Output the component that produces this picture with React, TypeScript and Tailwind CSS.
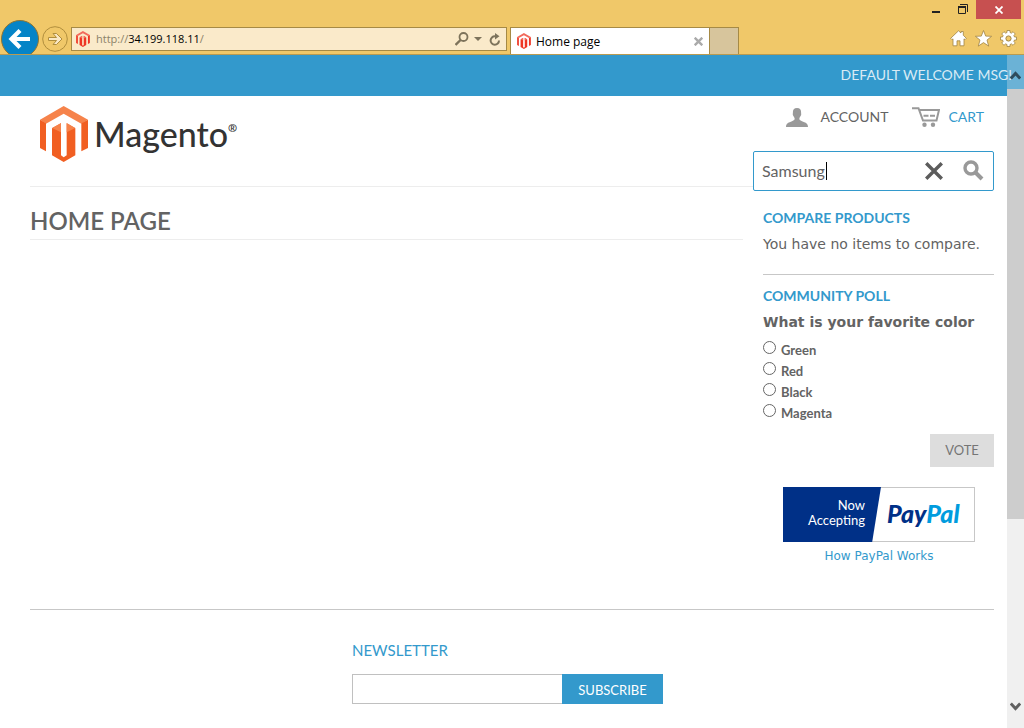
import { useState } from "react";

const raleway = "font-['Lato','Liberation_Sans',sans-serif]";
const verdana = "font-['DejaVu_Sans',sans-serif]";
const segoe = "font-['Open_Sans','Noto_Sans',sans-serif]";

function MagentoMark({ className, favicon = false }: { className: string; favicon?: boolean }) {
  const light = favicon ? "#f26a5c" : "#f6834b";
  const dark = favicon ? "#ee3524" : "#f15f22";
  return (
    <svg className={className} viewBox="60 30 144 168" aria-hidden="true">
      <path fill={light} d="M131 30 60 71l18 12 53-30 53 30 20-12z" />
      <path fill={dark} d="M60 71v85l18 10V82zM204 71v85l-20 10V82zM96 97v81l35 20 35-20V97l-26-15v96l-9 6-8-6V82z" />
      <path fill={light} d="m96 96 27-15v28zM166 96l-26-15v28z" />
    </svg>
  );
}

function BrowserChrome() {
  return (
    <header className={`relative flex h-[55px] border-b border-[#b99b51] bg-[#f0c869] text-[12px] text-black ${segoe}`}>
      <div className="flex min-w-0 flex-1 items-end">
        <button type="button" aria-label="Back" className="h-[34px] w-[40px] shrink-0 overflow-hidden">
          <svg className="h-[40px] w-[40px]" viewBox="0 0 40 40">
            <circle cx="20" cy="19" r="18.5" fill="#0584c7" stroke="#8b7434" />
            <path d="M30 19H12M20 10.500 11.500 19l8.500 8.500" fill="none" stroke="#fff" strokeWidth="4.200" />
          </svg>
        </button>
        <button type="button" aria-label="Forward" className="mb-[2px] ml-[2px] shrink-0">
          <svg className="size-[26px]" viewBox="0 0 26 26" fill="none">
            <circle cx="13" cy="13" r="12.300" stroke="#b08e3d" />
            <path d="M6.500 11.500h8l-3.500-4h3.500l5.500 5.500-5.500 5.500H11l3.500-4h-8z" fill="#fae8c4" stroke="#b08e3d" />
          </svg>
        </button>
        <div className="mb-[3px] ml-[3px] flex h-[24px] min-w-0 flex-1 items-center border border-[#a68a45] bg-[#faeaca] pr-[5px] pl-[4px]">
          <MagentoMark favicon className="mr-[6px] h-[16px] w-[14px] shrink-0" />
          <div className="flex-1 truncate pt-[1px] text-[11px] text-[#8b8269]">
            http://<span className="text-black">34.199.118.11</span>/
          </div>
          <button type="button" aria-label="Search">
            <svg className="h-[14px] w-[14px]" viewBox="0 0 14 14" fill="none" stroke="#7d735b">
              <circle cx="8.500" cy="5" r="4" strokeWidth="1.800" />
              <path d="m5.500 8-5 5" strokeWidth="2.400" />
            </svg>
          </button>
          <button type="button" aria-label="Show address history" className="mx-[5px]">
            <svg className="h-[4px] w-[8px]" viewBox="0 0 8 4"><path d="M0 0h8L4 4z" fill="#7d735b" /></svg>
          </button>
          <button type="button" aria-label="Refresh" className="ml-[2px]">
            <svg className="h-[13px] w-[12px]" viewBox="0 0 12 13" fill="none" stroke="#7d735b">
              <path d="M10 7.500A4.200 4.200 0 1 1 6 3.300h2" strokeWidth="2" />
              <path d="M6 0v6.500l4.500-3.200z" fill="#7d735b" stroke="none" />
            </svg>
          </button>
        </div>
      </div>
      <div className="flex w-[517px] shrink-0 items-end">
        <div className="ml-[3px] flex h-[27px] w-[200px] items-center border border-b-0 border-[#a68a45] bg-white px-[6px]">
          <MagentoMark favicon className="mr-[5px] h-[16px] w-[14px]" />
          <span className="flex-1 pt-[2px]">Home page</span>
          <button type="button" aria-label="Close tab">
            <svg className="size-[9px]" viewBox="0 0 9 9" stroke="#aaa" strokeWidth="2.400"><path d="m.7.700 7.600 7.600M8.300.700.700 8.300" /></svg>
          </button>
        </div>
        <button type="button" aria-label="New tab" className="h-[27px] w-[29px] border border-b-0 border-l-0 border-[#a68a45] bg-[#d7c59c]" />
        <div className="ml-auto flex h-full flex-col items-end justify-between">
          <div className="mr-[3px] flex">
            <button type="button" aria-label="Minimize" className="w-[26px] pb-[1px]">
              <svg className="mx-auto h-[18px] w-[8px]" viewBox="0 0 8 18"><path d="M0 11h8v2H0z" fill="#222" /></svg>
            </button>
            <button type="button" aria-label="Restore" className="w-[27px]">
              <svg className="mx-auto h-[19px] w-[10px]" viewBox="0 0 10 19" fill="none" stroke="#222">
                <path d="M2 4.500h7.500V12" /><path d="M.5 7h7v6.500h-7z" /><path d="M0 7h8" strokeWidth="2" />
              </svg>
            </button>
            <button type="button" aria-label="Close" className="h-[19px] w-[45px] bg-[#c75050]">
              <svg className="mx-auto size-[8px]" viewBox="0 0 8 8" stroke="#fff" strokeWidth="1.800"><path d="m.5.500 7 7M7.500.500l-7 7" /></svg>
            </button>
          </div>
          <div className="mr-[7px] mb-[7px] flex gap-[8px]">
            <button type="button" aria-label="Home">
              <svg className="size-[17px]" viewBox="0 0 17 17"><path d="M8.500.800 11 3V1.500h2.300v3.800l3 3-1.300 1.400-1-.9v7h-4v-5H7v5H3v-7l-1 .9L.700 8.300z" fill="#fff" stroke="#a08445" strokeWidth=".8" /></svg>
            </button>
            <button type="button" aria-label="Favorites">
              <svg className="size-[17px]" viewBox="0 0 17 17"><path d="m8.500.500 2.200 5.600 5.900.2-4.600 3.800 1.700 6-5.200-3.500-5.200 3.500 1.700-6L.400 6.300l5.900-.2z" fill="#fff" stroke="#a08445" strokeWidth=".8" /></svg>
            </button>
            <button type="button" aria-label="Tools">
              <svg className="size-[17px]" viewBox="0 0 17 17">
                <path d="M7 .5h3v2l1.500.6L13 1.700 15.300 4 13.900 5.500l.6 1.500h2v3h-2l-.6 1.500 1.400 1.500-2.300 2.300-1.500-1.400-1.500.6v2H7v-2l-1.500-.6L4 15.300 1.700 13l1.400-1.500L2.500 10h-2V7h2l.6-1.500L1.700 4 4 1.700l1.500 1.400L7 2.500z" fill="#fff" stroke="#a08445" strokeWidth=".8" />
                <circle cx="8.500" cy="8.500" r="2.600" fill="#f0c869" stroke="#a08445" />
              </svg>
            </button>
          </div>
        </div>
      </div>
    </header>
  );
}

function SearchBox() {
  const [query, setQuery] = useState("Samsung");
  return (
    <form className="flex h-[40px] items-center rounded-[2px] border border-[#3399cc] bg-white pr-[9px] pl-[8px]">
      <input
        aria-label="Search entire store"
        value={query}
        onChange={(e) => setQuery(e.target.value)}
        className={`field-sizing-content max-w-[150px] bg-transparent text-[16px] leading-[20px] text-[#636363] caret-transparent outline-none ${raleway}`}
      />
      <span className="ml-px h-[18px] w-px bg-black" />
      <button type="button" aria-label="Clear" onClick={() => setQuery("")} className="ml-auto">
        <svg className="size-[18px]" viewBox="0 0 18 18" stroke="#5c5c5c" strokeWidth="3.400"><path d="m1.200 1.200 15.600 15.600M16.800 1.200 1.200 16.800" /></svg>
      </button>
      <button type="submit" aria-label="Search" className="ml-[20px] pb-[2px]">
        <svg className="size-[21px]" viewBox="0 0 21 21" fill="none" stroke="#999">
          <circle cx="8" cy="8" r="6" strokeWidth="3.400" />
          <path d="m12.500 12.500 6.500 6.500" strokeWidth="4" />
        </svg>
      </button>
    </form>
  );
}

function Sidebar() {
  return (
    <aside className="text-[#636363]">
      <nav className={`flex h-[55px] items-start justify-end gap-[24px] pt-[11px] pr-[10px] text-[14px] leading-[20px] ${raleway}`}>
        <a href="#account" className="flex items-center gap-[12px]">
          <svg className="h-[19px] w-[22px]" viewBox="0 0 22 19" fill="#999">
            <path d="M11 0c3 0 4.300 2 4.100 4.500-.1 1.200.4 1.100 0 2.400-.6 1.800-1.400 2-1.700 3.400-.3 1.700.6 2.100 2.600 2.900 3.200 1.200 6 2 6 5.800H0c0-3.800 2.800-4.600 6-5.800 2-.8 2.900-1.200 2.600-2.900-.3-1.400-1.100-1.600-1.700-3.400-.4-1.300.1-1.200 0-2.400C6.700 2 8 0 11 0z" />
          </svg>
          ACCOUNT
        </a>
        <a href="#cart" className="flex items-center gap-[8px] text-[#3399cc]">
          <svg className="h-[20px] w-[28px]" viewBox="0 0 28 20" fill="none" stroke="#999" strokeWidth="2">
            <path d="M0 1.200h6.500L11 13.500h13.500L27 3H7.500" />
            <path d="M11.500 8.800h5M18 8.800h5" />
            <circle cx="12.500" cy="17.700" r="2.200" fill="#999" stroke="none" />
            <circle cx="21" cy="17.700" r="2.200" fill="#999" stroke="none" />
          </svg>
          CART
        </a>
      </nav>
      <SearchBox />
      <section className="ml-[10px] pt-[17px] pb-[20px]">
        <h2 className={`text-[14px] leading-[20px] font-bold text-[#3399cc] ${raleway}`}>COMPARE PRODUCTS</h2>
        <p className={`mt-[6px] text-[14px] leading-[20px] whitespace-nowrap ${verdana}`}>You have no items to compare.</p>
      </section>
      <form className="ml-[10px] border-t border-[#c7c7c7] pt-[11px]">
        <h2 className={`text-[14px] leading-[20px] font-bold text-[#3399cc] ${raleway}`}>COMMUNITY POLL</h2>
        <fieldset className="pt-[6px]">
          <legend className={`float-left mb-[8px] w-full text-[14px] leading-[20px] font-bold whitespace-nowrap ${verdana}`}>What is your favorite color</legend>
          {["Green", "Red", "Black", "Magenta"].map((color) => (
            <label key={color} className={`clear-both flex h-[21px] items-start gap-[5px] text-[13px] leading-[20px] font-bold ${raleway}`}>
              <input type="radio" name="color" value={color} className="mt-[1px] size-[13px] appearance-none rounded-full border border-[#666] bg-white checked:border-4" />
              <span>{color}</span>
            </label>
          ))}
        </fieldset>
        <div className="flex justify-end pt-[10px]">
          <button type="submit" className={`h-[33px] w-[64px] bg-[#dddddd] text-[13px] text-[#757575] ${raleway}`}>VOTE</button>
        </div>
      </form>
      <a href="#paypal" className="mt-[20px] ml-[30px] block w-[192px] text-center">
        <span className="flex h-[55px] border border-[#c7c7c7]">
          <span className={`-m-px w-[98px] shrink-0 bg-[#003087] pt-[11px] pr-[16px] text-right text-[13px] leading-[15px] text-white [clip-path:polygon(0_0,100%_0,91%_100%,0_100%)] ${raleway}`}>
            <span className="block">Now</span>
            <span className="block">Accepting</span>
          </span>
          <span className={`ml-[7px] text-[25px] leading-[50px] font-black text-[#003087] italic ${raleway}`}>Pay<span className="text-[#009cde]">Pal</span></span>
        </span>
        <span className={`mt-[6px] block text-[12px] leading-[16px] text-[#3399cc] ${verdana}`}>How PayPal Works</span>
      </a>
    </aside>
  );
}

function ScrollBar() {
  return (
    <div className="absolute inset-y-0 right-0 flex w-[17px] flex-col">
      <button type="button" aria-label="Scroll up" className="flex h-[34px] items-center justify-center bg-[#f0f0f0]/30 pt-[7px]">
        <svg className="h-[9px] w-[11px]" viewBox="0 0 11 9" fill="none" stroke="#304b5b" strokeWidth="3"><path d="m.8 7.500 4.700-5 4.700 5" /></svg>
      </button>
      <div className="flex flex-1 flex-col bg-[#f0f0f0]"><div className="h-[430px] bg-[#cdcdcd]" /></div>
      <button type="button" aria-label="Scroll down" className="flex h-[34px] items-center justify-center bg-[#f0f0f0] pb-[9px]">
        <svg className="h-[9px] w-[11px]" viewBox="0 0 11 9" fill="none" stroke="#606060" strokeWidth="3"><path d="m.8 1.500 4.700 5 4.700-5" /></svg>
      </button>
    </div>
  );
}

export default function App() {
  return (
    <div className="flex min-h-screen flex-col bg-white">
      <BrowserChrome />
      <div className="relative flex-1">
        <div className={`h-[41px] bg-[#3399cc] pr-[12px] text-right text-[14px] leading-[40px] text-[#d9ebf5] ${raleway}`}>DEFAULT WELCOME MSG!</div>
        <div className="px-[30px]">
          <div className="grid grid-cols-[1fr_241px]">
            <div>
              <div className="flex h-[91px] items-start border-b border-[#ededed] pt-[10px] pl-[10px]">
                <a href="#home" className="flex items-start">
                  <MagentoMark className="h-[56px] w-[48px]" />
                  <span className={`ml-[6px] text-[34px] leading-[56px] font-medium text-[#333] ${raleway}`}>Magento</span>
                  <span className={`pt-[12px] text-[11px] leading-[20px] font-bold text-[#333] ${segoe}`}>®</span>
                </a>
              </div>
              <main className="mr-[10px] border-b border-[#ededed] pt-[18px] pb-[2px]">
                <h1 className={`text-[24px] leading-[32px] font-semibold text-[#636363] ${raleway}`}>HOME PAGE</h1>
              </main>
            </div>
            <Sidebar />
          </div>
          <footer className="mt-[45px] flex justify-center border-t border-[#c7c7c7] pt-[30px] pb-[24px]">
            <form className="mr-[9px] w-[311px]">
              <label htmlFor="newsletter" className={`block text-[15px] leading-[20px] text-[#3399cc] ${raleway}`}>NEWSLETTER</label>
              <div className="mt-[14px] flex h-[30px]">
                <input id="newsletter" type="email" className="min-w-0 flex-1 border border-r-0 border-[#c0c0c0] px-[8px] outline-none" />
                <button type="submit" className={`w-[101px] bg-[#3399cc] pt-[3px] text-[13px] text-white ${raleway}`}>SUBSCRIBE</button>
              </div>
            </form>
          </footer>
        </div>
        <ScrollBar />
      </div>
    </div>
  );
}
